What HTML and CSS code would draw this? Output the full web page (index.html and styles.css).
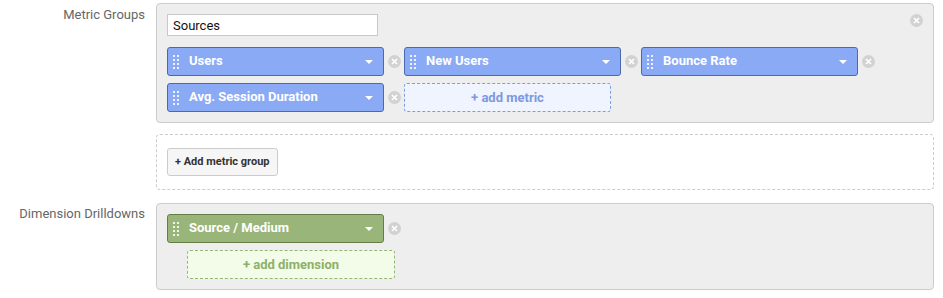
FILE: index.html
```html
<!DOCTYPE html>
<html>
<head>
    <meta charset="utf-8" />
    <title>Custom Report</title>
    <link rel="stylesheet" href="styles.css">
</head>
<body>
<div class="form">
    <div class="field">
        <div class="field_label">Metric Groups</div>
        <div class="panel">
            <a class="panel_close" href="javascript:;" title="Remove group">
                <svg width="13" height="13" viewBox="0 0 12 12"><circle cx="6" cy="6" r="6" fill="#d2d2d2"/><path d="M3.7 3.7L8.3 8.3M8.3 3.7L3.7 8.3" stroke="#fff" stroke-width="1.6"/></svg>
            </a>
            <input class="group_name" type="text" value="Sources" />
            <div class="chips">
                <div class="chip_item">
                    <div class="chip blue"><span class="grip"></span><span class="chip_text">Users</span><span class="caret"></span></div>
                    <a class="remove" href="javascript:;"><svg width="13" height="13" viewBox="0 0 12 12"><circle cx="6" cy="6" r="6" fill="#d2d2d2"/><path d="M3.7 3.7L8.3 8.3M8.3 3.7L3.7 8.3" stroke="#fff" stroke-width="1.6"/></svg></a>
                </div>
                <div class="chip_item">
                    <div class="chip blue"><span class="grip"></span><span class="chip_text">New Users</span><span class="caret"></span></div>
                    <a class="remove" href="javascript:;"><svg width="13" height="13" viewBox="0 0 12 12"><circle cx="6" cy="6" r="6" fill="#d2d2d2"/><path d="M3.7 3.7L8.3 8.3M8.3 3.7L3.7 8.3" stroke="#fff" stroke-width="1.6"/></svg></a>
                </div>
                <div class="chip_item">
                    <div class="chip blue"><span class="grip"></span><span class="chip_text">Bounce Rate</span><span class="caret"></span></div>
                    <a class="remove" href="javascript:;"><svg width="13" height="13" viewBox="0 0 12 12"><circle cx="6" cy="6" r="6" fill="#d2d2d2"/><path d="M3.7 3.7L8.3 8.3M8.3 3.7L3.7 8.3" stroke="#fff" stroke-width="1.6"/></svg></a>
                </div>
                <div class="chip_item">
                    <div class="chip blue"><span class="grip"></span><span class="chip_text">Avg. Session Duration</span><span class="caret"></span></div>
                    <a class="remove" href="javascript:;"><svg width="13" height="13" viewBox="0 0 12 12"><circle cx="6" cy="6" r="6" fill="#d2d2d2"/><path d="M3.7 3.7L8.3 8.3M8.3 3.7L3.7 8.3" stroke="#fff" stroke-width="1.6"/></svg></a>
                </div>
                <a class="add_box add_metric" href="javascript:;">+ add metric</a>
            </div>
        </div>
    </div>

    <div class="field">
        <div class="field_label"></div>
        <div class="panel dashed">
            <a class="btn" href="javascript:;">+ Add metric group</a>
        </div>
    </div>

    <div class="field field_dim">
        <div class="field_label">Dimension Drilldowns</div>
        <div class="panel">
            <div class="chip_item">
                <div class="chip green"><span class="grip"></span><span class="chip_text">Source / Medium</span><span class="caret"></span></div>
                <a class="remove" href="javascript:;"><svg width="13" height="13" viewBox="0 0 12 12"><circle cx="6" cy="6" r="6" fill="#d2d2d2"/><path d="M3.7 3.7L8.3 8.3M8.3 3.7L3.7 8.3" stroke="#fff" stroke-width="1.6"/></svg></a>
            </div>
            <a class="add_box add_dimension" href="javascript:;">+ add dimension</a>
        </div>
    </div>
</div>
</body>
</html>
```

FILE: styles.css
```css
body{margin: 0;background: #fff;font-family: Roboto, "Liberation Sans", Arial, sans-serif;font-size: 13px;color: #333;}
a{text-decoration: none;}
.form{padding: 3px 9px 0 0;}
.field{display: flex;gap: 11px;margin-bottom: 11px;}
.field_dim{margin-top: 13px;}
.field_label{width: 145px;flex: none;text-align: right;color: #666;font-size: 13px;line-height: 16px;padding-top: 4px;}
.field_dim .field_label{padding-top: 3px;}
.panel{position: relative;flex: 1;background: #eee;border: 1px solid #ccc;border-radius: 4px;padding: 10px 10px 10px 10px;}
.panel.dashed{background: #fff;border: 1px dashed #ccc;padding: 13px 10px 13px 10px;}
.panel_close{position: absolute;top: 10px;right: 10px;width: 13px;height: 13px;display: block;}
.panel_close svg, .remove svg{display: block;}
.group_name{display: block;box-sizing: border-box;width: 211px;height: 22px;margin: 0;padding: 0 5px;border: 1px solid #c8c8c8;background: #fff;font-family: Roboto, "Liberation Sans", Arial, sans-serif;font-size: 13px;color: #111;outline: none;}
.chips{display: flex;flex-wrap: wrap;row-gap: 7px;margin-top: 11px;}
.chip_item{display: flex;align-items: center;}
.chip{position: relative;box-sizing: border-box;width: 217px;height: 29px;border-radius: 3px;display: flex;align-items: center;padding: 0 10px 2px 21px;color: #fff;font-weight: bold;font-size: 13px;}
.chip.blue{background: #8aaaf6;border: 1px solid #4d69ae;}
.chip.green{background: #99b57a;border: 1px solid #647f45;}
.chip_text{flex: 1;}
.caret{margin-top: 2px;}
.grip{position: absolute;left: 5px;top: 7px;width: 6px;height: 14px;background-image: radial-gradient(circle, rgba(255,255,255,0.85) 0.9px, transparent 1.1px);background-size: 4px 4px;background-position: -1px -1px;}
.caret{width: 0;height: 0;border-left: 4px solid transparent;border-right: 4px solid transparent;border-top: 4px solid #fff;}
.remove{width: 20px;height: 20px;display: flex;align-items: center;justify-content: center;}
.add_box{box-sizing: border-box;height: 29px;display: flex;align-items: center;justify-content: center;font-weight: bold;font-size: 13px;border-radius: 3px;padding-bottom: 1px;}
.add_metric{width: 207px;background: #eff4fe;border: 1px dashed #7f9cdf;color: #7d99df;}
.add_dimension{width: 208px;margin: 7px 0 0 20px;background: #f2fce8;border: 1px dashed #97b676;color: #8eb069;}
.btn{display: inline-block;box-sizing: border-box;height: 28px;line-height: 26px;padding: 0 7px;background: #f6f6f6;border: 1px solid #ccc;border-radius: 3px;color: #333;font-weight: bold;font-size: 11px;}
```
